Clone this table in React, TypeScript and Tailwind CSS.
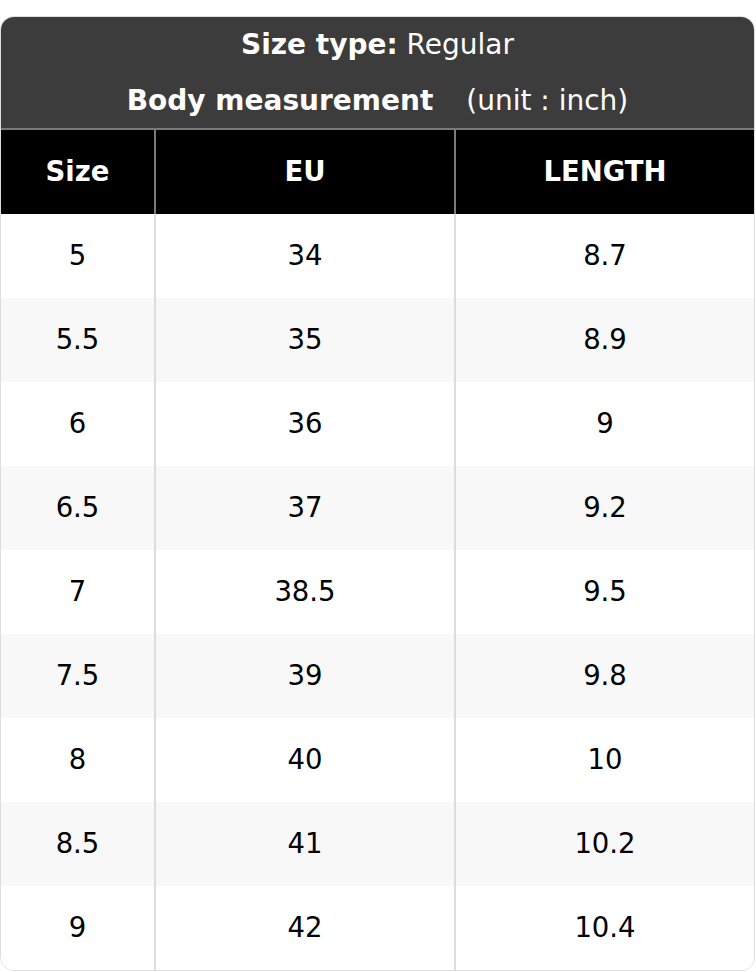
const rows = [
  ['5', '34', '8.7'],
  ['5.5', '35', '8.9'],
  ['6', '36', '9'],
  ['6.5', '37', '9.2'],
  ['7', '38.5', '9.5'],
  ['7.5', '39', '9.8'],
  ['8', '40', '10'],
  ['8.5', '41', '10.2'],
  ['9', '42', '10.4'],
];

export default function App() {
  return (
    <div className="bg-white pt-4 pr-[1px] font-['DejaVu_Sans',sans-serif]">
      <div className="border border-[#dddddd] rounded-[14px] overflow-hidden">
        <div className="bg-[#3c3c3c] text-white text-center text-[28px] border-b-2 border-[#7a7a7a]">
          <div className="h-[56px] leading-[56px]">
            <span className="font-bold">Size type:</span> Regular
          </div>
          <div className="h-[55px] leading-[55px]">
            <span className="font-bold">Body measurement</span>
            <span className="ml-[33px]">(unit : inch)</span>
          </div>
        </div>
        <table className="w-full border-collapse text-[27.5px] text-black">
          <thead>
            <tr className="bg-black text-white h-[84px]">
              <th className="w-[154px] font-bold text-center">Size</th>
              <th className="w-[300px] font-bold text-center border-l-2 border-[#7a7a7a]">EU</th>
              <th className="font-bold text-center border-l-2 border-[#7a7a7a]">LENGTH</th>
            </tr>
          </thead>
          <tbody>
            {rows.map((r, i) => (
              <tr key={i} className={`h-[84px] ${i % 2 === 1 ? 'bg-[#f8f8f8]' : 'bg-white'}`}>
                <td className="text-center">{r[0]}</td>
                <td className="text-center border-l-2 border-[#dddddd]">{r[1]}</td>
                <td className="text-center border-l-2 border-[#dddddd]">{r[2]}</td>
              </tr>
            ))}
          </tbody>
        </table>
      </div>
    </div>
  );
}
